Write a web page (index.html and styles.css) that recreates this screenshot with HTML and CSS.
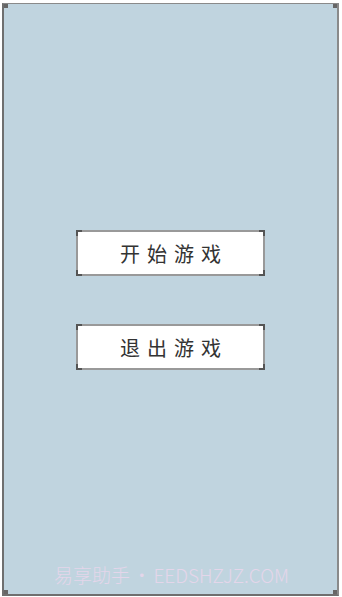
FILE: index.html
```html
<!DOCTYPE html>
<html lang="zh">
<head>
<meta charset="utf-8">
<link rel="stylesheet" href="styles.css">
</head>
<body>
<div class="frame">
  <i class="fc tl"></i><i class="fc tr"></i><i class="fc bl"></i><i class="fc br"></i>
  <div class="menu">
    <div class="btn"><i class="c tl"></i><i class="c tr"></i><i class="c bl"></i><i class="c br"></i>开始游戏</div>
    <div class="btn"><i class="c tl"></i><i class="c tr"></i><i class="c bl"></i><i class="c br"></i>退出游戏</div>
  </div>
  <div class="mark">易享助手 • EEDSHZJZ.COM</div>
</div>
</body>
</html>
```
FILE: styles.css
```css
html, body { margin: 0; padding: 0; background: #ffffff; }
body { width: 342px; height: 597px; overflow: hidden; }
.frame {
  position: relative;
  box-sizing: border-box;
  margin: 3px 3px 0 2px;
  height: 593px;
  background: #c0d4df;
  border-top: 1px solid #8a8a8a;
  border-left: 2px solid #6f6f6f;
  border-right: 2px solid #8a8a8a;
  border-bottom: 2px solid #6f6f6f;
  display: flex;
  flex-direction: column;
  align-items: center;
}
.menu {
  margin-top: 226px;
  display: flex;
  flex-direction: column;
  gap: 48px;
}
.btn {
  position: relative;
  box-sizing: border-box;
  width: 189px;
  height: 46px;
  background: #ffffff;
  border: 2px solid #999999;
  display: flex;
  align-items: center;
  justify-content: center;
  font-family: "Noto Sans CJK SC", sans-serif;
  font-size: 20px;
  letter-spacing: 7px;
  padding-left: 7px;
  color: #333333;
}
.c { position: absolute; width: 4px; height: 4px; border: 0 solid #555; }
.c.tl { top: -2px; left: -2px; border-top-width: 2px; border-left-width: 2px; }
.c.tr { top: -2px; right: -2px; border-top-width: 2px; border-right-width: 2px; }
.c.bl { bottom: -2px; left: -2px; border-bottom-width: 2px; border-left-width: 2px; }
.c.br { bottom: -2px; right: -2px; border-bottom-width: 2px; border-right-width: 2px; }
.fc { position: absolute; width: 4px; height: 4px; background: #666; }
.fc.tl { top: 0; left: 0; }
.fc.tr { top: 0; right: 0; }
.fc.bl { bottom: 0; left: 0; }
.fc.br { bottom: 0; right: 0; }
.mark {
  margin-top: auto;
  margin-bottom: 6px;
  font-family: "Noto Sans CJK SC", sans-serif;
  font-weight: 300;
  font-size: 19px;
  word-spacing: -2px;
  color: #e4d6ea;
  padding-left: 2px;
}
```
